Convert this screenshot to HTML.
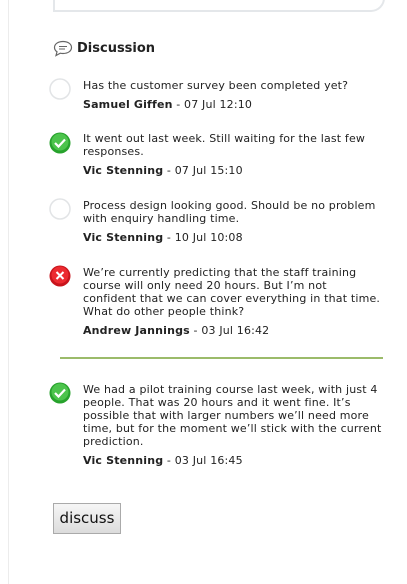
<!DOCTYPE html>
<html><head><style>
body{margin:0;width:407px;height:584px;background:#fff;position:relative;overflow:hidden;font-family:"DejaVu Sans",Verdana,sans-serif;color:#222}
.box{position:absolute;left:53px;top:-20px;width:328px;height:30px;border:2px solid #e4e7ea;border-top:none;border-radius:0 0 14px 0}
.edge{position:absolute;left:8px;top:0;width:3px;height:584px;border-left:1px solid #ececec}
h2{position:absolute;left:77px;top:41px;margin:0;font-size:13px;font-weight:bold;color:#222}
.it{position:absolute;left:83px;width:298px;font-size:11px;line-height:13px;letter-spacing:0.17px;white-space:nowrap}
.it .n{margin-top:6px}
.it b{font-weight:bold}
.ic{position:absolute;left:49px;width:22px;height:22px}
hr{position:absolute;left:60px;top:357px;width:323px;margin:0;border:none;height:2px;background:#9bbb6a}
.btn{position:absolute;left:53px;top:503px;border:1px solid #aaa;background:linear-gradient(#f6f6f6,#dcdcdc);font-size:15px;line-height:29px;text-align:center;color:#111;box-sizing:border-box;width:68px;height:31px}
</style></head><body>
<div class="edge"></div>
<div class="box"></div>
<svg style="position:absolute;left:53px;top:40px" width="20" height="17" viewBox="0 0 20 17"><path d="M10 1.5C5 1.5 1.5 4 1.5 7.5c0 2 1 3.3 2.5 4.3L3 15.5l4.2-2.3c.9.2 1.8.3 2.8.3 5 0 8.5-2.5 8.5-6S15 1.5 10 1.5z" fill="none" stroke="#666" stroke-width="1.2"/><path d="M6 6.5h8M6 9h6" stroke="#666" stroke-width="1.1"/></svg>
<h2>Discussion</h2>

<svg class="ic" style="top:78px" viewBox="0 0 22 22"><circle cx="11" cy="11" r="10" fill="#fff" stroke="#e2e4e6" stroke-width="1.5"/></svg>
<div class="it" style="top:79px">Has the customer survey been completed yet?<div class="n"><b>Samuel Giffen</b> - 07 Jul 12:10</div></div>

<svg class="ic" style="top:132px" viewBox="0 0 22 22"><circle cx="11" cy="11" r="10.5" fill="#27a22c"/><circle cx="11" cy="10" r="8.5" fill="#4cc44c"/><path d="M6 11l3.5 3.5L16 7.5" fill="none" stroke="#fff" stroke-width="2.2"/></svg>
<div class="it" style="top:132px">It went out last week. Still waiting for the last few<br>responses.<div class="n"><b>Vic Stenning</b> - 07 Jul 15:10</div></div>

<svg class="ic" style="top:198px" viewBox="0 0 22 22"><circle cx="11" cy="11" r="10" fill="#fff" stroke="#e2e4e6" stroke-width="1.5"/></svg>
<div class="it" style="top:199px">Process design looking good. Should be no problem<br>with enquiry handling time.<div class="n"><b>Vic Stenning</b> - 10 Jul 10:08</div></div>

<svg class="ic" style="top:265px" viewBox="0 0 22 22"><circle cx="11" cy="11" r="10.5" fill="#c8141c"/><circle cx="11" cy="10" r="8.5" fill="#ec2a30"/><path d="M7.5 7l7 7M14.5 7l-7 7" stroke="#fff" stroke-width="2"/></svg>
<div class="it" style="top:266px">We’re currently predicting that the staff training<br>course will only need 20 hours. But I’m not<br>confident that we can cover everything in that time.<br>What do other people think?<div class="n"><b>Andrew Jannings</b> - 03 Jul 16:42</div></div>

<hr>

<svg class="ic" style="top:382px" viewBox="0 0 22 22"><circle cx="11" cy="11" r="10.5" fill="#27a22c"/><circle cx="11" cy="10" r="8.5" fill="#4cc44c"/><path d="M6 11l3.5 3.5L16 7.5" fill="none" stroke="#fff" stroke-width="2.2"/></svg>
<div class="it" style="top:383px">We had a pilot training course last week, with just 4<br>people. That was 20 hours and it went fine. It’s<br>possible that with larger numbers we’ll need more<br>time, but for the moment we’ll stick with the current<br>prediction.<div class="n"><b>Vic Stenning</b> - 03 Jul 16:45</div></div>

<div class="btn">discuss</div>
</body></html>
